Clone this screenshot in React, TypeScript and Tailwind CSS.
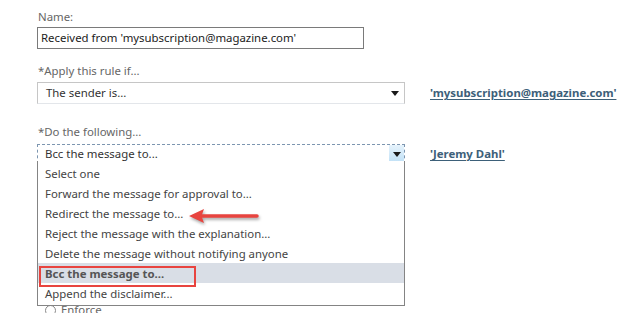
import React from "react";

const options = [
  "Select one",
  "Forward the message for approval to...",
  "Redirect the message to...",
  "Reject the message with the explanation...",
  "Delete the message without notifying anyone",
  "Bcc the message to...",
  "Append the disclaimer...",
];

function Caret() {
  return (
    <svg width="8" height="5" viewBox="0 0 8 5">
      <path d="M0 0h8L4 5Z" fill="#1a1a1a" />
    </svg>
  );
}

function RedArrow() {
  return (
    <svg
      width="74"
      height="20"
      viewBox="0 0 74 20"
      className="drop-shadow-[1px_2px_1.5px_rgba(0,0,0,0.35)]"
    >
      <path d="M2 9 L17 2 L14.5 9 L17 16 Z" fill="#e8443f" />
      <path d="M14 9 H70" stroke="#e8443f" strokeWidth="3.5" strokeLinecap="round" />
    </svg>
  );
}

export default function App() {
  return (
    <div className="relative h-[313px] w-[634px] overflow-hidden bg-white font-['Noto_Sans','Open_Sans',sans-serif] text-[11.4px] leading-[16px] text-[#444]">
      <div className="flex flex-col pl-[37px] pt-[9px]">
        <div className="pl-[1px] text-[#666]">Name:</div>
        <div className="mt-[2px] flex h-[22px] w-[327px] items-center border border-[#7a7a7a] pl-[3px] text-[#222]">
          Received from 'mysubscription@magazine.com'
        </div>

        <div className="mt-[14px] pl-[1px] text-[#666]">*Apply this rule if...</div>
        <div className="mt-[3px] flex items-center">
          <div className="flex h-[22px] w-[368px] items-center justify-between border border-[#c6c6c6] border-b-[#e3e6ea] pl-[8px] pr-[5px] text-[#333]">
            <span>The sender is...</span>
            <Caret />
          </div>
          <a className="ml-[25px] font-bold text-[#3d6079] underline underline-offset-2">
            'mysubscription@magazine.com'
          </a>
        </div>

        <div className="mt-[20px] pl-[1px] text-[#666]">*Do the following...</div>
        <div className="mt-[4px] flex items-center">
          <div className="flex h-[20px] w-[368px] items-center justify-between border border-dashed border-[#7d96b0] pl-[7px] text-[#333]">
            <span>Bcc the message to...</span>
            <span className="flex h-full w-[15px] items-center justify-center bg-gradient-to-b from-[#e6f3fc] to-[#bfe0f6]">
              <Caret />
            </span>
          </div>
          <a className="ml-[25px] font-bold text-[#3d6079] underline underline-offset-2">
            'Jeremy Dahl'
          </a>
        </div>

        <div className="mt-[138px] flex items-center gap-[5px] pl-[8px] text-[#666]">
          <span className="h-[11px] w-[11px] rounded-full border border-[#888]" />
          <span>Enforce</span>
        </div>
      </div>

      <ul className="absolute left-[37px] top-[161px] w-[368px] border border-t-0 border-[#848484] bg-white py-[2px]">
        {options.map((opt) => {
          const selected = opt === "Bcc the message to...";
          return (
            <li
              key={opt}
              className={`flex h-[20px] items-center pl-[7px] pt-[2px] ${
                selected ? "bg-[#d9dee6] font-bold text-[#555]" : ""
              }`}
            >
              {opt}
            </li>
          );
        })}
      </ul>

      <div className="absolute left-[39px] top-[266px] h-[21px] w-[157px] border-[2.5px] border-[#e8443f]" />

      <div className="absolute left-[187px] top-[207px]">
        <RedArrow />
      </div>
    </div>
  );
}
